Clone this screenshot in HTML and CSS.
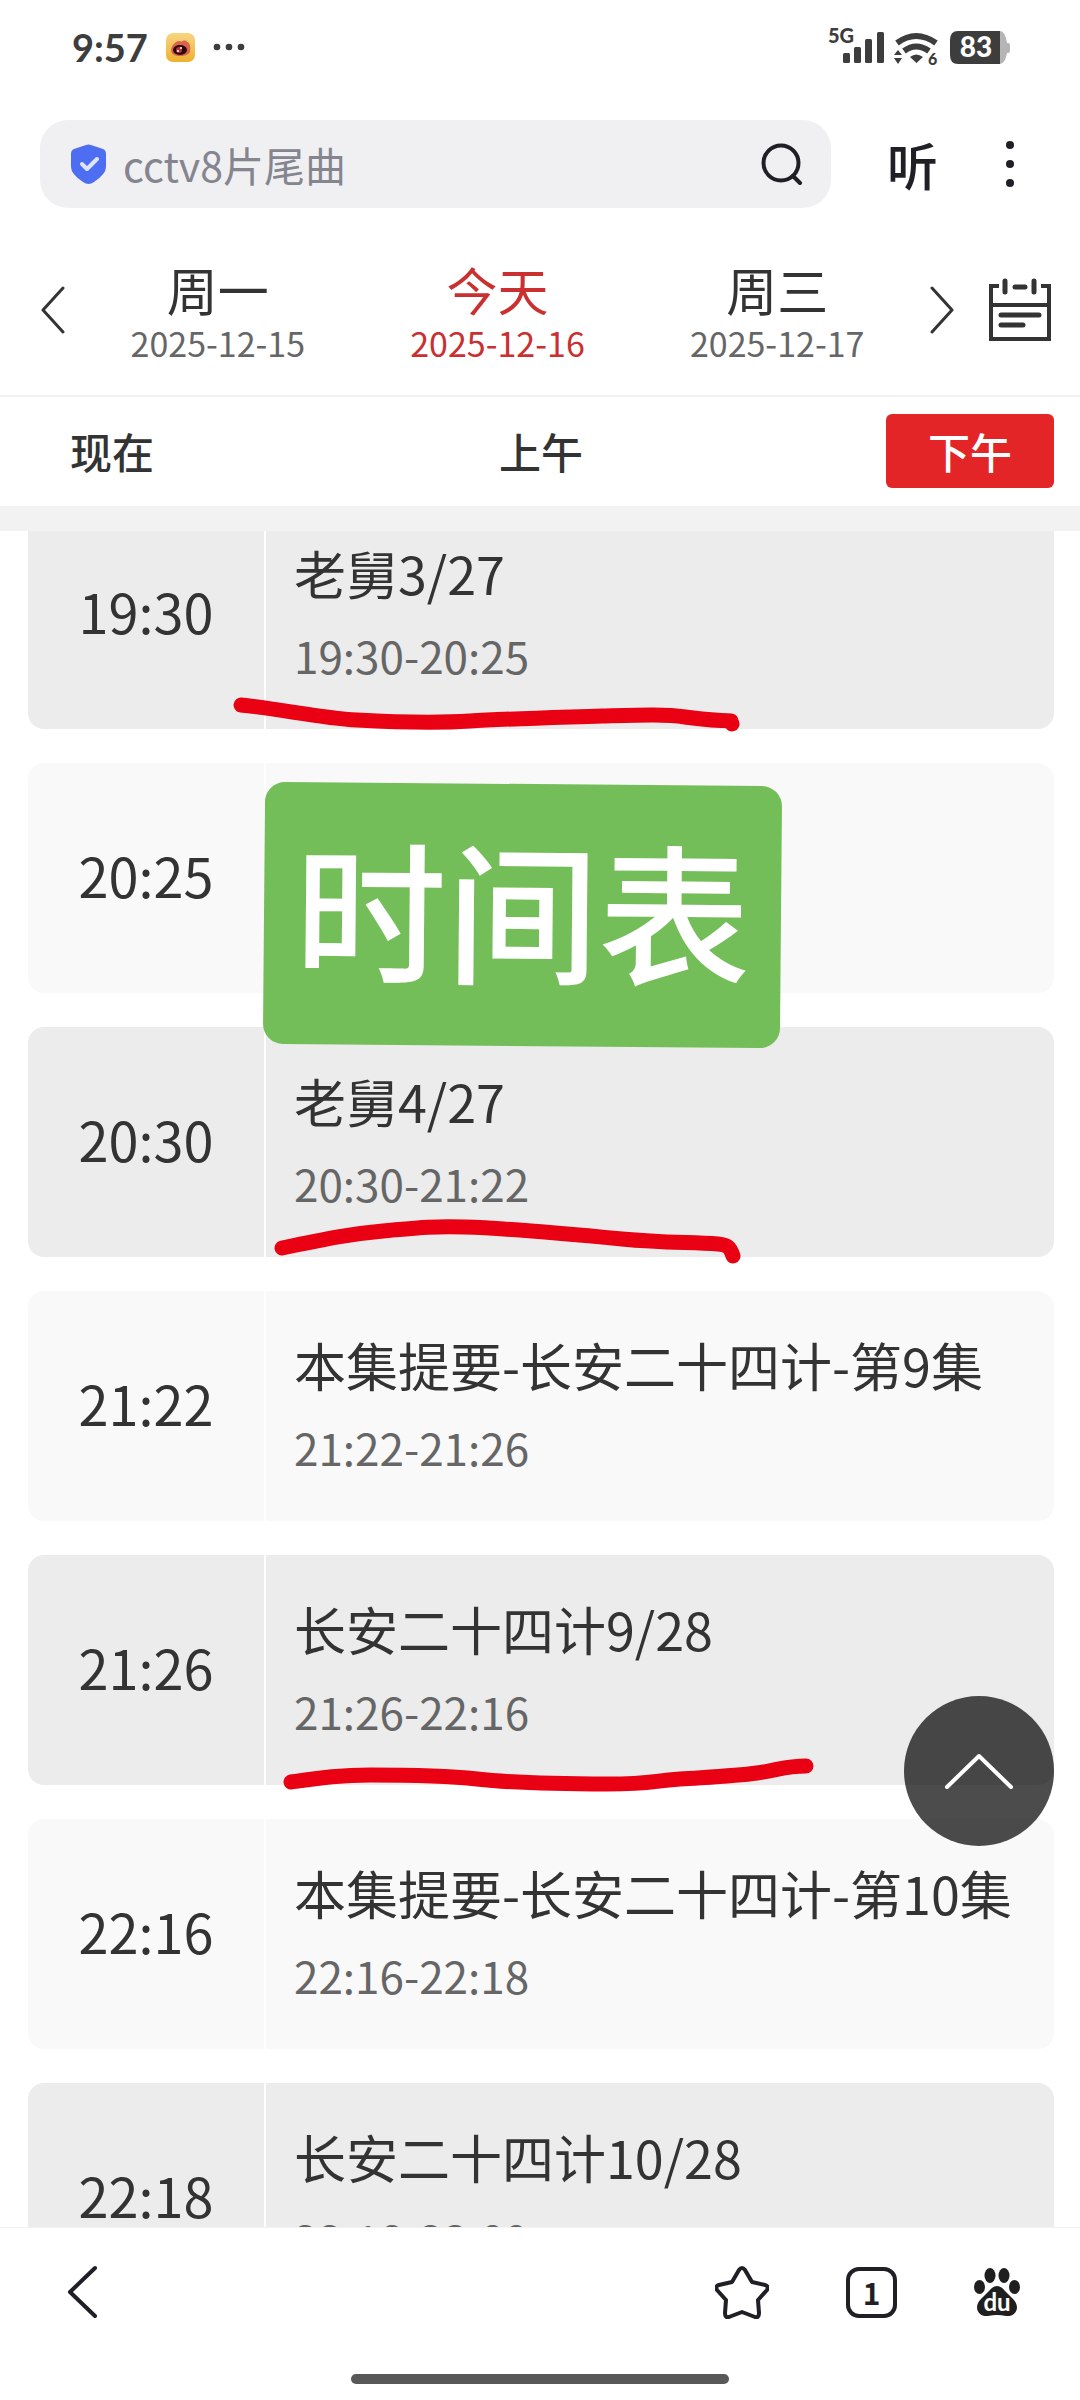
FILE: index.html
```html
<!DOCTYPE html>
<html lang="zh-CN">
<head>
<meta charset="utf-8">
<meta name="viewport" content="width=device-width, initial-scale=1">
<title>节目时间表</title>
<link rel="stylesheet" href="styles.css">
</head>
<body>
<div class="app">
  <div class="status">
    <span class="status-time">9:57</span>
    <svg class="weibo" width="29" height="29" viewBox="0 0 29 29" aria-hidden="true">
      <defs><linearGradient id="gold" x1="0" y1="0" x2="0" y2="1"><stop offset="0" stop-color="#f8d583"/><stop offset="1" stop-color="#efb02f"/></linearGradient></defs>
      <rect width="29" height="29" rx="7" fill="url(#gold)"/>
      <path d="M5 17c0-4 5-9 8-9 1 0 2 0 2 1 2-2 6-2 6 0 2-1 4 5 3 8 1 4-5 6-10 6S5 21 5 17z" fill="#d9644b"/>
      <ellipse cx="14" cy="17" rx="7" ry="5" fill="#2b0808"/>
      <circle cx="13" cy="17" r="3" fill="#b5323a"/><circle cx="12" cy="18" r="1" fill="#fff"/><circle cx="15" cy="15" r="1" fill="#fff"/>
    </svg>
    <svg class="more-dots" width="32" height="8" viewBox="0 0 32 8" fill="#3d3d3d" aria-hidden="true"><circle cx="4" cy="4" r="3.3"/><circle cx="16" cy="4" r="3.3"/><circle cx="28" cy="4" r="3.3"/></svg>
    <div class="status-right">
      <svg width="182" height="52" viewBox="828 20 182 52" aria-label="5G 83%">
        <g fill="#3d3d3d">
          <text x="828" y="42" class="net">5G</text>
          <rect x="843" y="52" width="7" height="10" rx="1.5"/><rect x="854" y="46" width="7" height="16" rx="1.5"/><rect x="865" y="38" width="7" height="24" rx="1.5"/><rect x="877" y="31" width="7" height="31" rx="1.5"/>
          <path d="M894 54l4-5 4 5zM894 57h8l-4 6zM910 56q6-5 13 0l-6.500 6z"/>
          <text x="928" y="64" class="gen">6</text>
          <path d="M958 30h42v33h-42q-8 0-8-9V39q0-9 8-9z"/>
        </g>
        <path d="M1000 30q5 0 7 12h1q2 0 2 2v6q0 2-2 2h-1q-2 11-7 11z" fill="#b5b5b5"/>
        <path d="M897 42q19-14 39 0M904 50q12-9 25 0" fill="none" stroke="#3d3d3d" stroke-width="6"/>
        <text x="976" y="56" class="charge" text-anchor="middle">83</text>
      </svg>
    </div>
  </div>

  <header class="toolbar">
    <label class="search">
      <svg width="37" height="40" viewBox="0 0 37 40" aria-hidden="true"><path d="M16 1q2.500-1 5 0l12 4q3 1 3 5v13q0 7-12 15-5.500 4-11 0Q1 30 1 23V10q0-4 3-5z" fill="#4e6ef2"/><path d="M12 20l5 5 10-10" fill="none" stroke="#dfe5ff" stroke-width="4" stroke-linecap="round" stroke-linejoin="round"/></svg>
      <input class="search-input" type="text" aria-label="搜索" placeholder="cctv8片尾曲">
      <svg width="42" height="42" viewBox="0 0 42 42" fill="none" stroke="#1f1f25" stroke-width="4" stroke-linecap="round" aria-hidden="true"><circle cx="20" cy="20" r="17.500"/><path d="M32 33l7 7"/></svg>
    </label>
    <button class="listen">听</button>
    <button class="menu" aria-label="更多"><svg width="8" height="48" viewBox="0 0 8 48" fill="#1f1f25"><circle cx="4" cy="5" r="4"/><circle cx="4" cy="24" r="4"/><circle cx="4" cy="43" r="4"/></svg></button>
  </header>

  <nav class="dates">
    <button class="arrow" aria-label="前一天"><svg width="24" height="48" viewBox="0 0 24 48"><path d="M22 2L2 24l20 22"/></svg></button>
    <button class="day"><span class="day-name">周一</span><span class="day-date">2025-12-15</span></button>
    <button class="day day-on"><span class="day-name">今天</span><span class="day-date">2025-12-16</span></button>
    <button class="day"><span class="day-name">周三</span><span class="day-date">2025-12-17</span></button>
    <button class="arrow" aria-label="后一天"><svg width="24" height="48" viewBox="0 0 24 48"><path d="M2 2l20 22L2 46"/></svg></button>
    <button class="calendar" aria-label="日历"><svg width="62" height="64" viewBox="0 0 62 64" fill="none" stroke="#333" stroke-width="4"><path d="M10 8H2v53h58V8h-8M2 27h58"/><path d="M16 3v11M45 3v11M26 9h10M12 37h38M12 47h22" stroke-linecap="round" stroke-width="5"/></svg></button>
  </nav>

  <div class="periods">
    <button class="period">现在</button>
    <button class="period">上午</button>
    <button class="period period-on">下午</button>
  </div>

  <main class="schedule">
    <ol class="programs">
      <li class="program dark"><time class="start">19:30</time><div class="info"><div class="title">老舅3/27</div><div class="range">19:30-20:25</div></div></li>
      <li class="program"><time class="start">20:25</time><div class="info"></div></li>
      <li class="program dark"><time class="start">20:30</time><div class="info"><div class="title">老舅4/27</div><div class="range">20:30-21:22</div></div></li>
      <li class="program"><time class="start">21:22</time><div class="info"><div class="title">本集提要-长安二十四计-第9集</div><div class="range">21:22-21:26</div></div></li>
      <li class="program dark"><time class="start">21:26</time><div class="info"><div class="title">长安二十四计9/28</div><div class="range">21:26-22:16</div></div></li>
      <li class="program"><time class="start">22:16</time><div class="info"><div class="title">本集提要-长安二十四计-第10集</div><div class="range">22:16-22:18</div></div></li>
      <li class="program dark"><time class="start">22:18</time><div class="info"><div class="title">长安二十四计10/28</div><div class="range">22:18-23:09</div></div></li>
    </ol>
    <svg class="marks" width="1080" height="1696" viewBox="0 531 1080 1696" fill="none" stroke="#e90012" stroke-width="15" stroke-linecap="round" stroke-linejoin="round" aria-hidden="true">
      <path d="M241 705C281 709 320 718 357 720S439 723 470 721 540 718 602 716C640 715 665 714 685 717S715 720 731 721L732 724"/>
      <path d="M282 1248C330 1238 350 1234 383 1231S430 1226 465 1227 580 1235 622 1239 690 1242 718 1244C728 1245 730 1247 733 1256"/>
      <path d="M291 1782C320 1778 340 1775 370 1775S440 1775 477 1779 560 1784 607 1784 650 1781 680 1779 735 1776 757 1773 785 1766 806 1766"/>
    </svg>
    <div class="sticker">时间表</div>
    <button class="to-top" aria-label="回到顶部"><svg width="70" height="36" viewBox="0 0 70 36" fill="none" stroke="#fff" stroke-width="4" stroke-linecap="round" stroke-linejoin="round"><path d="M3 34L35 3l32 31"/></svg></button>
  </main>

  <footer class="bottom">
    <div class="tools">
      <button class="tool back" aria-label="返回"><svg width="32" height="54" viewBox="0 0 32 54"><path d="M29 3L4 27l25 24"/></svg></button>
      <button class="tool" aria-label="收藏"><svg width="54" height="54" viewBox="0 0 54 54"><path d="M24 5q3-4 6 0l7 12 13 3q4 1 2 5l-9 10 1 13q0 5-4 4l-13-5-13 5q-4 1-4-4l1-13-9-10q-2-4 2-5l13-3z"/></svg></button>
      <button class="tool tabs" aria-label="1 个标签页">1</button>
      <a class="tool" href="#" aria-label="首页"><svg class="paw" width="46" height="50" viewBox="0 0 46 50"><ellipse cx="5.500" cy="20" rx="5.500" ry="7"/><ellipse cx="16" cy="8.500" rx="5.500" ry="7.500"/><ellipse cx="30" cy="8.500" rx="5.500" ry="7.500"/><ellipse cx="40.500" cy="20" rx="5.500" ry="7"/><path d="M15 24q8-10 16 0l8 8c8 8 3 18-7 17q-9-2-18 0C4 50-1 40 7 32z"/><text x="23" y="44" text-anchor="middle">du</text></svg></a>
    </div>
    <div class="home-bar"></div>
  </footer>
</div>
</body>
</html>
```
FILE: styles.css
```css
* { box-sizing: border-box; }
body {
  margin: 0;
  background: #fff;
  color: #333;
  font-family: "Noto Sans CJK SC", sans-serif;
}
button {
  border: 0;
  padding: 0;
  background: none;
  color: inherit;
  font: inherit;
}
svg { display: block; flex: none; }

.app {
  display: flex;
  flex-direction: column;
  height: 100vh;
}

/* status bar */
.status {
  display: flex;
  align-items: center;
  height: 94px;
  padding: 0 70px 0 72px;
  color: #3d3d3d;
}
.status-time { font: 700 38px/40px Lato, sans-serif; }
.weibo { margin-left: 18px; }
.more-dots { margin-left: 18px; }
.status-right { margin-left: auto; }
.net { font: 900 20px Lato, sans-serif; }
.gen { font: 900 16px Lato, sans-serif; }
.charge { font: 900 28px Lato, sans-serif; fill: #fff; }

/* search */
.toolbar {
  display: flex;
  align-items: center;
  padding: 26px 66px 26px 40px;
}
.search {
  display: flex;
  flex: 1;
  align-items: center;
  gap: 16px;
  height: 88px;
  padding: 0 28px 0 30px;
  border-radius: 28px;
  background: #f0f0f2;
}
.search-input {
  flex: 1;
  min-width: 0;
  border: 0;
  padding: 0;
  background: none;
  font: 400 41px/60px "Noto Sans CJK SC", sans-serif;
  outline: 0;
}
.search-input::placeholder { color: #858590; opacity: 1; }
.listen {
  margin-left: 56px;
  color: #1f1f25;
  font-size: 51px;
  font-weight: 500;
  line-height: 54px;
}
.menu { margin-left: 68px; }

/* date picker */
.dates {
  display: flex;
  align-items: center;
  height: 163px;
  padding: 0 29px 9px 28px;
  border-bottom: 2px solid #f2f2f2;
}
.arrow {
  display: flex;
  justify-content: center;
  width: 50px;
}
.arrow path {
  fill: none;
  stroke: #333;
  stroke-width: 3;
  stroke-linecap: round;
  stroke-linejoin: round;
}
.day {
  display: flex;
  flex: 1;
  flex-direction: column;
  align-items: center;
  padding-top: 6px;
}
.day-name { font-size: 51px; line-height: 60px; }
.day-date { color: #666; font-size: 34px; line-height: 48px; }
.day-on, .day-on .day-date { color: #c9302f; }
.calendar { margin-left: 22px; }

/* part of day */
.periods {
  display: flex;
  justify-content: space-between;
  padding: 17px 26px 18px 28px;
  border-bottom: 25px solid #f2f2f2;
}
.period {
  width: 168px;
  height: 74px;
  border-radius: 6px;
  font-size: 42px;
  font-weight: 500;
  line-height: 72px;
}
.period-on { background: #e42527; color: #fff; }

/* programme list */
.schedule {
  position: relative;
  flex: 1;
  min-height: 0;
  overflow: hidden;
}
.programs {
  display: flex;
  flex-direction: column;
  gap: 34px;
  margin: -32px 26px 0 28px;
  padding: 0;
  list-style: none;
}
.program {
  display: flex;
  flex: none;
  gap: 2px;
  height: 230px;
  --cell: #f9f9f9;
}
.dark { --cell: #ececec; }
.start {
  width: 236px;
  border-radius: 16px 0 0 16px;
  background: var(--cell);
  font-size: 54px;
  line-height: 224px;
  text-align: center;
}
.info {
  flex: 1;
  padding: 34px 28px;
  border-radius: 0 16px 16px 0;
  background: var(--cell);
}
.title { font-size: 52px; line-height: 80px; white-space: nowrap; }
.range { color: #666; font-size: 44px; line-height: 84px; }

/* notes laid over the list */
.marks { position: absolute; top: 0; left: 0; }
.sticker {
  position: absolute;
  top: 253px;
  left: 264px;
  width: 517px;
  height: 262px;
  border-radius: 20px;
  background: #74be59;
  color: #fff;
  font-size: 152px;
  font-weight: 500;
  line-height: 246px;
  text-align: center;
  transform: rotate(0.5deg);
}
.to-top {
  position: absolute;
  right: 26px;
  bottom: 381px;
  display: flex;
  align-items: center;
  justify-content: center;
  width: 150px;
  height: 150px;
  border-radius: 50%;
  background: rgba(0, 0, 0, 0.7);
}

/* browser bar */
.bottom {
  position: relative;
  height: 173px;
  border-top: 1px solid #f2f2f2;
  background: #fff;
}
.tools {
  display: flex;
  align-items: center;
  gap: 77px;
  padding: 37px 60px 0 66px;
}
.tool { color: #1f1f25; }
.tool path {
  fill: none;
  stroke: #1f1f25;
  stroke-width: 4;
  stroke-linecap: round;
  stroke-linejoin: round;
}
.back { margin-right: auto; }
.tabs {
  width: 51px;
  height: 51px;
  border: 4px solid #1f1f25;
  border-radius: 13px;
  font: 700 30px/43px "Noto Sans CJK SC", sans-serif;
}
.paw ellipse, .paw path { fill: #1f1f1f; stroke: none; }
.paw text { fill: #fff; font: 700 24px Lato, sans-serif; }
.home-bar {
  width: 378px;
  height: 10px;
  margin: 55px auto 0;
  border-radius: 5px;
  background: #585858;
}
```
